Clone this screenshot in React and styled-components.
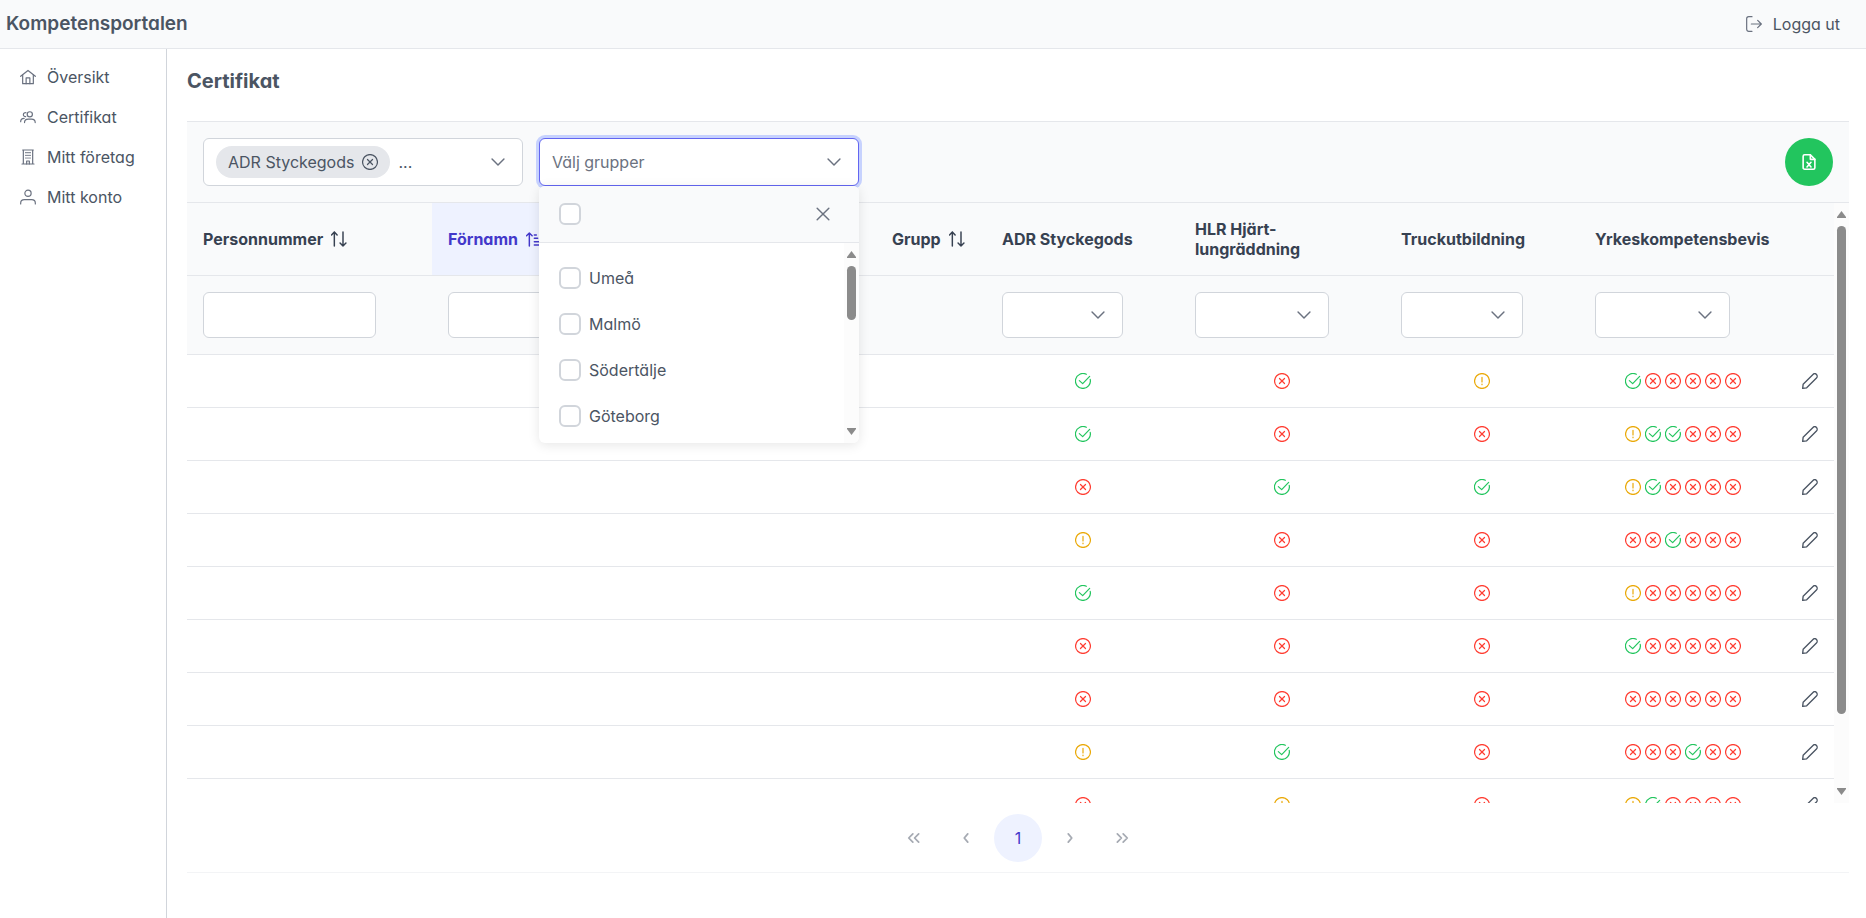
import React, { useState } from "react";
import styled, { createGlobalStyle, css } from "styled-components";

const groups = ["Umeå", "Malmö", "Södertälje", "Göteborg"];

// c = giltigt, x = saknas, w = går snart ut
const rows = [
  { id: 1, adr: "c", hlr: "x", truck: "w", ykb: "cxxxxx" },
  { id: 2, adr: "c", hlr: "x", truck: "x", ykb: "wccxxx" },
  { id: 3, adr: "x", hlr: "c", truck: "c", ykb: "wcxxxx" },
  { id: 4, adr: "w", hlr: "x", truck: "x", ykb: "xxcxxx" },
  { id: 5, adr: "c", hlr: "x", truck: "x", ykb: "wxxxxx" },
  { id: 6, adr: "x", hlr: "x", truck: "x", ykb: "cxxxxx" },
  { id: 7, adr: "x", hlr: "x", truck: "x", ykb: "xxxxxx" },
  { id: 8, adr: "w", hlr: "c", truck: "x", ykb: "xxxcxx" },
  { id: 9, adr: "x", hlr: "w", truck: "x", ykb: "wcxxxx" },
];

const columns = [
  { label: "Personnummer", width: 245, sort: "none", filter: "text" },
  { label: "Förnamn", width: 222, sort: "asc", filter: "text" },
  { label: "Efternamn", width: 222, sort: "none", filter: "text" },
  { label: "Grupp", width: 110, sort: "none" },
  { label: "ADR Styckegods", width: 193, filter: "select" },
  { label: "HLR Hjärt-lungräddning", width: 206, filter: "select" },
  { label: "Truckutbildning", width: 194, filter: "select" },
  { label: "Yrkeskompetensbevis", width: 207, filter: "select" },
  { label: "", width: 48 },
];

const icons = {
  home: (
    <>
      <path d="M1 11 12 2.2 23 11" />
      <path d="M4 8.8V22h16V8.8" />
      <path d="M9.2 22v-8.6h5.6V22" />
    </>
  ),
  users: (
    <>
      <circle cx="14.7" cy="8" r="3.9" />
      <path d="M6.8 20.3c0-3.6 2.6-5 5.5-5h5c3 0 5.5 1.4 5.5 5" />
      <path d="M9 5.6a3 3 0 1 0-.4 5.8" />
      <path d="M1 19c0-3.2 1.6-4.8 5.2-4.8" />
    </>
  ),
  building: (
    <>
      <path d="M4 1.5h16M5 1.5v21M19 1.5v21M3 22.5h18" />
      <path d="M10 22.5V18h4v4.5" />
      <path d="M8.5 5.5h1M11.5 5.5h1M14.5 5.5h1M8.5 9.5h1M11.5 9.5h1M14.5 9.5h1M8.5 13.5h1M11.5 13.5h1M14.5 13.5h1" />
    </>
  ),
  user: (
    <>
      <circle cx="12" cy="6.5" r="4.7" />
      <path d="M1 22.5v-1.3c0-3 2.5-5.2 5.5-5.2h11c3 0 5.5 2.2 5.5 5.2v1.3" />
    </>
  ),
  signOut: (
    <>
      <path d="M9 23H4a3 3 0 0 1-3-3V4a3 3 0 0 1 3-3h5" />
      <path d="M8 12h15M17.5 6.5 23 12l-5.5 5.5" />
    </>
  ),
  c: (
    <>
      <path d="M22.8 9.5A11.2 11.2 0 1 1 17 2" />
      <path d="m6.5 11.5 5 4.5L22 5" />
    </>
  ),
  x: (
    <>
      <circle cx="12" cy="12" r="11.2" />
      <path d="m8.2 8.2 7.6 7.6M15.8 8.2l-7.6 7.6" />
    </>
  ),
  w: (
    <>
      <circle cx="12" cy="12" r="11.2" />
      <path d="M12 6.5v7M12 16.5v1" />
    </>
  ),
  pencil: (
    <path d="m1 23 .7-6L16.5 2.2a3.6 3.6 0 0 1 5.2 5.2L7 22.2z" />
  ),
  sortAlt: (
    <path d="M5 22.5v-21M.8 6 5 1.5 9.2 6M18 1.5v21M13.6 18l4.4 4.5 4.4-4.5" />
  ),
  sortUp: (
    <path d="M5 22.5V3M.8 7 5 3l4.2 4M12.5 6h3M12.5 11h5M12.5 16H20M12.5 21H23" />
  ),
  chevronDown: <path d="M1.8 7 12 17.2 22.2 7" />,
  times: <path d="m2 2 20 20M22 2 2 22" />,
  excel: (
    <>
      <path d="M14 1.2H5.5a2.3 2.3 0 0 0-2.3 2.3v17a2.3 2.3 0 0 0 2.3 2.3h13a2.3 2.3 0 0 0 2.3-2.3V8z" />
      <path d="M14 1.2V8h6.8M9 12.5l6 7M15 12.5l-6 7" />
    </>
  ),
  left: <path d="m15 5-6 7 6 7" />,
  right: <path d="m9 5 6 7-6 7" />,
  doubleLeft: <path d="m10 5-7 7 7 7M20 5l-7 7 7 7" />,
  doubleRight: <path d="m4 5 7 7-7 7M14 5l7 7-7 7" />,
};

function Icon({ name, size = 16, weight = 1.8 }) {
  return (
    <svg
      width={size}
      height={size}
      viewBox="0 0 24 24"
      fill="none"
      stroke="currentColor"
      strokeWidth={weight}
      strokeLinecap="round"
      strokeLinejoin="round"
      aria-hidden="true"
    >
      {icons[name]}
    </svg>
  );
}

function ScrollTrack({ length }) {
  return (
    <Track aria-hidden="true">
      <svg width="9" height="7" viewBox="0 0 9 7">
        <path d="M4.5 0 9 6v1H0V6z" />
      </svg>
      <Rail>
        <Thumb style={{ height: `${length}%` }} />
      </Rail>
      <svg width="9" height="7" viewBox="0 0 9 7">
        <path d="M4.5 7 9 1V0H0v1z" />
      </svg>
    </Track>
  );
}

function GroupPanel() {
  const [selected, setSelected] = useState([]);

  const toggle = (group) => {
    setSelected((prev) =>
      prev.includes(group) ? prev.filter((g) => g !== group) : [...prev, group]
    );
  };

  return (
    <Panel>
      <PanelHeader>
        <Checkbox
          type="checkbox"
          aria-label="Välj alla"
          checked={selected.length === groups.length}
          onChange={(e) => setSelected(e.target.checked ? groups : [])}
        />
        <CloseButton type="button" aria-label="Stäng">
          <Icon name="times" size={14} weight={2.5} />
        </CloseButton>
      </PanelHeader>
      <PanelBody>
        <Options>
          {groups.map((group) => (
            <li key={group}>
              <Option>
                <Checkbox
                  type="checkbox"
                  checked={selected.includes(group)}
                  onChange={() => toggle(group)}
                />
                {group}
              </Option>
            </li>
          ))}
        </Options>
        <ScrollTrack length={35} />
      </PanelBody>
    </Panel>
  );
}

function HeaderCell({ column }) {
  const { label, sort } = column;
  if (!label) return <Th aria-label="Redigera" />;
  return (
    <Th
      scope="col"
      $sorted={sort === "asc"}
      aria-sort={sort === "asc" ? "ascending" : undefined}
    >
      {sort ? (
        <SortButton type="button">
          {label}
          <Icon name={sort === "asc" ? "sortUp" : "sortAlt"} weight={2.2} />
        </SortButton>
      ) : (
        label
      )}
    </Th>
  );
}

function FilterCell({ column }) {
  return (
    <FilterTd>
      {column.filter === "text" && (
        <FilterInput type="text" aria-label={`Filtrera ${column.label}`} />
      )}
      {column.filter === "select" && (
        <SelectWrap>
          <FilterSelect aria-label={`Filtrera ${column.label}`}>
            <option value=""></option>
            <option value="c">Giltigt</option>
            <option value="w">Går snart ut</option>
            <option value="x">Saknas</option>
          </FilterSelect>
          <SelectArrow>
            <Icon name="chevronDown" size={14} weight={2.5} />
          </SelectArrow>
        </SelectWrap>
      )}
    </FilterTd>
  );
}

function Status({ value }) {
  return (
    <StatusList>
      {value.split("").map((status, i) => (
        <StatusIcon key={i} $status={status}>
          <Icon name={status} />
        </StatusIcon>
      ))}
    </StatusList>
  );
}

export default function App() {
  return (
    <>
      <GlobalStyle />
      <Topbar>
        <Brand>Kompetensportalen</Brand>
        <LogoutLink href="#logout">
          <Icon name="signOut" />
          Logga ut
        </LogoutLink>
      </Topbar>
      <Layout>
        <Sidebar aria-label="Huvudmeny">
          <MenuLink href="#oversikt">
            <Icon name="home" />
            Översikt
          </MenuLink>
          <MenuLink href="#certifikat">
            <Icon name="users" />
            Certifikat
          </MenuLink>
          <MenuLink href="#foretag">
            <Icon name="building" />
            Mitt företag
          </MenuLink>
          <MenuLink href="#konto">
            <Icon name="user" />
            Mitt konto
          </MenuLink>
        </Sidebar>
        <Content>
          <Title>Certifikat</Title>
          <Toolbar>
            <MultiSelect>
              <Chip>
                ADR Styckegods
                <ChipRemove type="button" aria-label="Ta bort ADR Styckegods">
                  <Icon name="x" />
                </ChipRemove>
              </Chip>
              <span>...</span>
              <Trigger type="button" aria-label="Välj certifikat">
                <Icon name="chevronDown" size={14} weight={2.5} />
              </Trigger>
            </MultiSelect>
            <MultiSelect $focused>
              <Placeholder>Välj grupper</Placeholder>
              <Trigger type="button" aria-label="Välj grupper" aria-expanded>
                <Icon name="chevronDown" size={14} weight={2.5} />
              </Trigger>
              <GroupPanel />
            </MultiSelect>
            <ExportButton type="button" aria-label="Exportera till Excel">
              <Icon name="excel" weight={2.4} />
            </ExportButton>
          </Toolbar>
          <TableArea>
            <TableScroll>
              <Table>
                <colgroup>
                  {columns.map((column, i) => (
                    <col key={i} width={column.width} />
                  ))}
                </colgroup>
                <thead>
                  <tr>
                    {columns.map((column, i) => (
                      <HeaderCell key={i} column={column} />
                    ))}
                  </tr>
                  <tr>
                    {columns.map((column, i) => (
                      <FilterCell key={i} column={column} />
                    ))}
                  </tr>
                </thead>
                <tbody>
                  {rows.map((row) => (
                    <tr key={row.id}>
                      <Td />
                      <Td />
                      <Td />
                      <Td />
                      <Td><Status value={row.adr} /></Td>
                      <Td><Status value={row.hlr} /></Td>
                      <Td><Status value={row.truck} /></Td>
                      <Td><Status value={row.ykb} /></Td>
                      <Td>
                        <EditButton type="button" aria-label="Redigera">
                          <Icon name="pencil" weight={2} />
                        </EditButton>
                      </Td>
                    </tr>
                  ))}
                </tbody>
              </Table>
            </TableScroll>
            <ScrollTrack length={88} />
          </TableArea>
          <Paginator aria-label="Sidor">
            <PageButton type="button" aria-label="Första sidan" disabled>
              <Icon name="doubleLeft" size={14} weight={3} />
            </PageButton>
            <PageButton type="button" aria-label="Föregående sida" disabled>
              <Icon name="left" size={14} weight={3} />
            </PageButton>
            <PageButton type="button" $active aria-current="page">
              1
            </PageButton>
            <PageButton type="button" aria-label="Nästa sida" disabled>
              <Icon name="right" size={14} weight={3} />
            </PageButton>
            <PageButton type="button" aria-label="Sista sidan" disabled>
              <Icon name="doubleRight" size={14} weight={3} />
            </PageButton>
          </Paginator>
        </Content>
      </Layout>
    </>
  );
}

const GlobalStyle = createGlobalStyle`
  *, *::before, *::after {
    box-sizing: border-box;
  }
  html, body, #root {
    height: 100%;
  }
  body {
    margin: 0;
    background: #ffffff;
    color: #4b5563;
    font-family: Inter, "Liberation Sans", sans-serif;
    font-feature-settings: "cv02", "cv03", "cv04", "cv11";
    font-size: 16px;
    line-height: 20px;
  }
  #root {
    display: flex;
    flex-direction: column;
  }
  button, input, select {
    font: inherit;
    font-feature-settings: inherit;
    color: inherit;
  }
  button {
    padding: 0;
    border: 0;
    background: none;
    cursor: pointer;
  }
  svg {
    display: block;
    flex: none;
  }
`;

const Topbar = styled.header`
  display: flex;
  align-items: center;
  justify-content: space-between;
  height: 49px;
  padding: 0 26px 0 6px;
  background: #f9fafb;
  border-bottom: 1px solid #e5e7eb;
`;

const Brand = styled.div`
  font-size: 19px;
  font-weight: 600;
`;

const linkStyle = css`
  display: flex;
  align-items: center;
  gap: 11px;
  color: #4b5563;
  text-decoration: none;

  svg {
    color: #6b7280;
  }
`;

const LogoutLink = styled.a`
  ${linkStyle}
`;

const Layout = styled.div`
  display: flex;
  flex: 1;
`;

const Sidebar = styled.nav`
  flex: none;
  width: 167px;
  padding: 8px 0;
  border-right: 1px solid #d1d5db;
`;

const MenuLink = styled.a`
  ${linkStyle}
  height: 40px;
  padding: 0 20px;
`;

const Content = styled.main`
  flex: 1;
  min-width: 0;
  padding: 20px 17px 20px 20px;
`;

const Title = styled.h1`
  margin: 0 0 28px;
  font-size: 20px;
  font-weight: 700;
  line-height: 24px;
`;

const Toolbar = styled.div`
  display: flex;
  align-items: center;
  gap: 16px;
  padding: 16px;
  background: #f9fafb;
  border: solid #e5e7eb;
  border-width: 1px 0;
`;

const MultiSelect = styled.div`
  position: relative;
  display: flex;
  align-items: center;
  gap: 8px;
  width: 320px;
  height: 48px;
  padding-left: 12px;
  background: #ffffff;
  border: 1px solid ${({ $focused }) => ($focused ? "#6366f1" : "#d1d5db")};
  border-radius: 6px;
  box-shadow: ${({ $focused }) => ($focused ? "0 0 0 3px #c7d2fe" : "none")};
`;

const Chip = styled.span`
  display: flex;
  align-items: center;
  gap: 8px;
  height: 32px;
  padding: 0 12px;
  border-radius: 16px;
  background: #e5e7eb;
`;

const ChipRemove = styled.button`
  display: flex;
`;

const Placeholder = styled.span`
  color: #6b7280;
`;

const Trigger = styled.button`
  display: flex;
  align-items: center;
  justify-content: center;
  width: 48px;
  height: 100%;
  margin-left: auto;
  color: #6b7280;
`;

const Panel = styled.div`
  position: absolute;
  z-index: 3;
  top: 47px;
  left: -1px;
  right: -1px;
  overflow: hidden;
  background: #ffffff;
  border-radius: 6px;
  box-shadow: 0 2px 12px rgba(0, 0, 0, 0.1);
`;

const PanelHeader = styled.div`
  display: flex;
  align-items: center;
  justify-content: space-between;
  padding: 12px 20px;
  background: #f9fafb;
  border-bottom: 1px solid #e5e7eb;
`;

const CloseButton = styled.button`
  display: flex;
  align-items: center;
  justify-content: center;
  width: 32px;
  height: 32px;
  color: #6b7280;
`;

const PanelBody = styled.div`
  display: flex;
  height: 200px;
`;

const Options = styled.ul`
  flex: 1;
  margin: 0;
  padding: 12px 0;
  overflow: hidden;
  list-style: none;
`;

const Option = styled.label`
  display: flex;
  align-items: center;
  gap: 8px;
  height: 46px;
  padding: 0 20px;
  cursor: pointer;
`;

const Checkbox = styled.input`
  appearance: none;
  flex: none;
  width: 22px;
  height: 22px;
  margin: 0;
  background: #ffffff;
  border: 2px solid #d1d5db;
  border-radius: 6px;

  &:checked {
    background: #6366f1;
    border-color: #6366f1;
  }
`;

const ExportButton = styled.button`
  display: flex;
  align-items: center;
  justify-content: center;
  width: 48px;
  height: 48px;
  margin-left: auto;
  border-radius: 50%;
  background: #22c55e;
  color: #ffffff;
`;

const TableArea = styled.div`
  display: flex;
  height: 600px;
`;

const TableScroll = styled.div`
  flex: 1;
  min-width: 0;
  overflow: hidden;
`;

const Table = styled.table`
  width: 100%;
  table-layout: fixed;
  border-spacing: 0;
`;

const Th = styled.th`
  height: 73px;
  padding: 16px;
  border-bottom: 1px solid #e5e7eb;
  background: ${({ $sorted }) => ($sorted ? "#eef2ff" : "#f9fafb")};
  color: ${({ $sorted }) => ($sorted ? "#4338ca" : "#374151")};
  font-weight: 700;
  text-align: left;
`;

const SortButton = styled.button`
  display: flex;
  align-items: center;
  gap: 8px;
`;

const FilterTd = styled.td`
  height: 79px;
  padding: 16px 56px 16px 16px;
  border-bottom: 1px solid #e5e7eb;
  background: #f9fafb;
`;

const fieldStyle = css`
  display: block;
  width: 100%;
  height: 46px;
  padding: 0 12px;
  background: #ffffff;
  border: 1px solid #d1d5db;
  border-radius: 6px;
`;

const FilterInput = styled.input`
  ${fieldStyle}
`;

const SelectWrap = styled.div`
  display: grid;
  align-items: center;

  > * {
    grid-area: 1 / 1;
  }
`;

const FilterSelect = styled.select`
  ${fieldStyle}
  appearance: none;
`;

const SelectArrow = styled.span`
  justify-self: end;
  margin-right: 18px;
  color: #6b7280;
  pointer-events: none;
`;

const Td = styled.td`
  height: 53px;
  padding: 0 16px;
  border-bottom: 1px solid #e5e7eb;
`;

const StatusList = styled.div`
  display: flex;
  justify-content: center;
  gap: 4px;
`;

const statusColors = { c: "#22c55e", x: "#ff3d32", w: "#eaa908" };

const StatusIcon = styled.span`
  color: ${({ $status }) => statusColors[$status]};
`;

const EditButton = styled.button`
  display: flex;
`;

const Track = styled.div`
  display: flex;
  flex: none;
  flex-direction: column;
  align-items: center;
  gap: 8px;
  width: 15px;
  padding: 8px 0;
  background: #fcfcfc;

  svg {
    fill: #8b8b8b;
  }
`;

const Rail = styled.div`
  flex: 1;
  width: 9px;
`;

const Thumb = styled.div`
  border-radius: 5px;
  background: #8b8b8b;
`;

const Paginator = styled.nav`
  display: flex;
  align-items: center;
  justify-content: center;
  gap: 4px;
  height: 70px;
  border-bottom: 1px solid #f3f4f6;
`;

const PageButton = styled.button`
  display: flex;
  align-items: center;
  justify-content: center;
  width: 48px;
  height: 48px;
  border-radius: 50%;
  background: ${({ $active }) => ($active ? "#eef2ff" : "transparent")};
  color: ${({ $active }) => ($active ? "#4338ca" : "#6b7280")};

  &:disabled {
    opacity: 0.6;
    cursor: default;
  }
`;
